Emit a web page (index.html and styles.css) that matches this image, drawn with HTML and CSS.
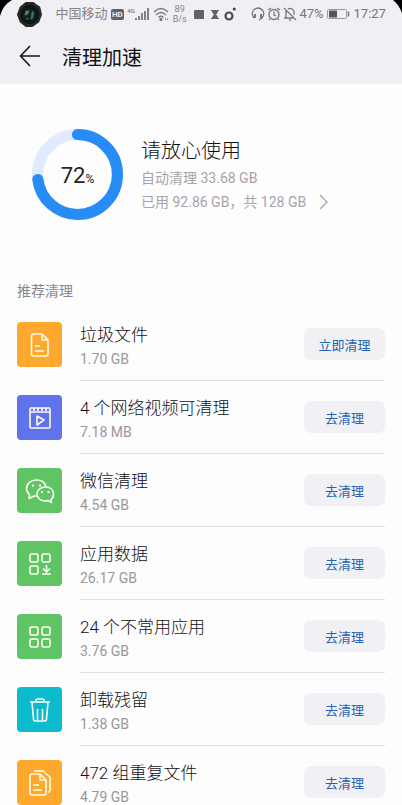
FILE: index.html
```html
<!DOCTYPE html>
<html lang="zh-CN">
<head>
<meta charset="utf-8">
<meta name="viewport" content="width=device-width, initial-scale=1">
<title>清理加速</title>
<link rel="stylesheet" href="styles.css">
</head>
<body>
<svg class="defs" width="0" height="0" aria-hidden="true">
  <symbol id="apps" viewBox="0 0 24 24"><rect x="2" y="2" width="8" height="8" rx="1.5"/><rect x="14" y="2" width="8" height="8" rx="1.5"/><rect x="2" y="14" width="8" height="8" rx="1.5"/></symbol>
</svg>
<header class="top">
  <svg class="corner corner-left" viewBox="0 0 14 16" aria-hidden="true"><path d="M0 0H12Q3 5 0 16Z"/></svg>
  <svg class="corner corner-right" viewBox="0 0 9 16" aria-hidden="true"><path d="M9 0H0Q6 5 9 13Z"/></svg>
  <div class="status">
    <svg class="camera" viewBox="0 0 28 28" aria-hidden="true"><path d="M10 1h8l7 5 2 8-3 8-7 5h-7l-6-5-3-8 3-8z" fill="#292628"/><circle cx="14" cy="14" r="10" fill="#101614"/><circle cx="14" cy="14" r="6" fill="#14251f"/><path d="M10 10l4 0-2 4-3 1z" fill="#508b74"/><path d="M17 10l2 3-2 6-2 0 1-6z" fill="#397562"/><path d="M10 17l3 1 0 2-3-1z" fill="#27584a"/></svg>
    <span class="carrier">中国移动</span>
    <span class="hd">HD</span>
    <span class="cell"><span class="net">4G</span><svg class="signal" viewBox="0 0 15 14" aria-hidden="true"><path d="M1 11v2M4 9v4M7 6v7M10 4v9M13 1v12"/></svg></span>
    <svg class="wifi" viewBox="0 0 16 14" aria-hidden="true"><path d="M1 5Q8-2 15 5M3 8q5-5 10 0M5.500 10.500q2.500-2.500 5 0"/><circle cx="8" cy="12.500" r="1"/><path d="M12 12h1M14 12h1"/></svg>
    <span class="speed"><span>89</span><span>B/s</span></span>
    <svg class="mini" viewBox="0 0 12 14" aria-hidden="true"><rect x="1" y="3" width="10" height="9" rx="1" fill="#626164"/></svg>
    <svg class="mini" viewBox="0 0 12 14" aria-hidden="true"><path d="M2 3h8v1H9q0 2-2 3.500Q9 9 9 11h1v1H2v-1h1q0-2 2-3.500Q3 6 3 4H2z" fill="#626164"/></svg>
    <svg class="mini" viewBox="0 0 12 14" aria-hidden="true"><circle cx="5" cy="9" r="3.500" fill="none" stroke="#4c4b4e" stroke-width="2.200"/><circle cx="10.300" cy="2" r="1.600" fill="#4c4b4e"/></svg>
    <span class="alerts">
      <svg class="small line" viewBox="0 0 14 14" aria-hidden="true"><path d="M3 11Q0 7 2 4Q4 1 7 1T12 4Q14 7 11 11L8 13"/><path d="M4 7v4M10 7v4" stroke-width="2"/></svg>
      <svg class="small line" viewBox="0 0 14 14" aria-hidden="true"><circle cx="7" cy="7.500" r="5"/><path d="M7 4.500V8l2 1M1 3l3-2M13 3l-3-2M3 12l-1 1M11 12l1 1"/></svg>
      <svg class="small line" viewBox="0 0 14 14" aria-hidden="true"><path d="M1 1l12 12M3 4v5l-1 2h8M5 2q2-1 4 0 2 1 2 3v3M6 13h2"/></svg>
      <span class="percent">47%</span>
    </span>
    <svg class="battery" viewBox="0 0 23 12" aria-hidden="true"><rect x=".5" y="1.500" width="19" height="9" rx="1" fill="none" stroke="#9b9a9d"/><rect x="2" y="2.500" width="8" height="7" fill="#565558"/><path d="M21.500 3.500v5" stroke="#77767a" stroke-width="1.500"/></svg>
    <span class="time">17:27</span>
  </div>
  <div class="titlebar">
    <button class="back" type="button" aria-label="返回"><svg viewBox="0 0 22 22" aria-hidden="true"><path d="M21 11H2M11 1L1.500 11 11 21"/></svg></button>
    <h1>清理加速</h1>
  </div>
</header>
<main>
  <section class="summary">
    <div class="gauge">
      <svg viewBox="0 0 90 90" aria-hidden="true"><circle class="track" cx="45" cy="45" r="39.500"/><circle class="value" cx="45" cy="45" r="39.500" pathLength="100" stroke-dasharray="73 27" transform="rotate(-90 45 45)"/></svg>
      <p class="gauge-text">72<small>%</small></p>
    </div>
    <div class="summary-text">
      <h2>请放心使用</h2>
      <p>自动清理 33.68 GB</p>
      <a href="#storage">已用 92.86 GB，共 128 GB<svg class="chevron" viewBox="0 0 10 16" aria-hidden="true"><path d="M1 1l7 7-7 7"/></svg></a>
    </div>
  </section>
  <section class="cleanup" id="storage">
    <h2 class="section-title">推荐清理</h2>
    <ul class="list">
      <li>
        <span class="tile orange"><svg viewBox="0 0 24 24" aria-hidden="true"><path d="M5.500 1H14l6 6v14q0 2-2 2H5.500q-2 0-2-2V3q0-2 2-2zM14 1v6h6M7 13h5M7 18h9"/></svg></span>
        <div class="row"><div class="info"><h3>垃圾文件</h3><p>1.70 GB</p></div><button type="button">立即清理</button></div>
      </li>
      <li>
        <span class="tile indigo"><svg viewBox="0 0 24 24" aria-hidden="true"><rect x="2" y="2" width="20" height="20" rx="1"/><path d="M2 6h20M6 2v3M10 2v3M14 2v3M18 2v3M9 10l7 4-7 5z"/></svg></span>
        <div class="row"><div class="info"><h3>4 个网络视频可清理</h3><p>7.18 MB</p></div><button type="button">去清理</button></div>
      </li>
      <li>
        <span class="tile green"><svg class="wide" viewBox="0 0 30 26" aria-hidden="true"><path d="M12 18H9l-5 2.500.5-4Q1.500 14 1.500 10.500C1.500 5.500 6 2 11.500 2c5 0 8.500 2.500 9.500 6.500"/><path d="M20.500 9c5 0 8 3 8 7 0 2.500-1 4.500-2.500 5.500l.5 3-3.500-2q-1 .5-2.500.5c-5 0-8.500-3-8.500-7s3.500-7 8.500-7z"/><path d="M7 7.500h2M14 7.500h2M16 14h2M22.500 14h2" stroke-width="2"/></svg></span>
        <div class="row"><div class="info"><h3>微信清理</h3><p>4.54 GB</p></div><button type="button">去清理</button></div>
      </li>
      <li>
        <span class="tile green"><svg viewBox="0 0 24 24" aria-hidden="true"><use href="#apps"/><path d="M18.500 13v7M15 16.500l3.500 3.500 3.500-3.500M14 22h9"/></svg></span>
        <div class="row"><div class="info"><h3>应用数据</h3><p>26.17 GB</p></div><button type="button">去清理</button></div>
      </li>
      <li>
        <span class="tile green"><svg viewBox="0 0 24 24" aria-hidden="true"><use href="#apps"/><rect x="14" y="14" width="8" height="8" rx="1.500"/></svg></span>
        <div class="row"><div class="info"><h3>24 个不常用应用</h3><p>3.76 GB</p></div><button type="button">去清理</button></div>
      </li>
      <li>
        <span class="tile cyan"><svg viewBox="0 0 24 24" aria-hidden="true"><path d="M2 4h20M8 4V2q0-1 1-1h6q1 0 1 1v2M4 4l1.500 17q0 2 2 2h9q2 0 2-2L20 4M9.500 11v11M14.500 11v11"/></svg></span>
        <div class="row"><div class="info"><h3>卸载残留</h3><p>1.38 GB</p></div><button type="button">去清理</button></div>
      </li>
      <li>
        <span class="tile orange"><svg class="wide" viewBox="0 0 30 26" aria-hidden="true"><path d="M7 4h8l6 6V23q0 2-2 2H7q-2 0-2-2V6q0-2 2-2zM15 4v6h6M8 15h6M8 20h9M9 1h9l7 6V20q0 2-2 2.500"/></svg></span>
        <div class="row"><div class="info"><h3>472 组重复文件</h3><p>4.79 GB</p></div><button type="button">去清理</button></div>
      </li>
    </ul>
  </section>
</main>
</body>
</html>
```
FILE: styles.css
```css
* { box-sizing: border-box; }
body {
  margin: 0;
  background: #fdfdfe;
  color: #252426;
  font-family: Roboto, "Noto Sans CJK SC", sans-serif;
}
h1, h2, h3, p, ul { margin: 0; padding: 0; font-weight: 400; }
button { border: 0; font-family: inherit; cursor: pointer; }
svg { display: block; flex: none; }
.defs { position: absolute; }

.top { position: relative; background: #f0eff3; }
.corner { position: absolute; top: 0; width: 14px; height: 16px; }
.corner-left { left: 0; }
.corner-right { right: 0; width: 9px; }
.status {
  display: flex;
  align-items: center;
  justify-content: space-between;
  height: 28px;
  padding: 0 16px;
  color: #858488;
  font-size: 13px;
  line-height: 16px;
  white-space: nowrap;
}
.camera { width: 27px; height: 27px; margin-right: 9px; }
.hd {
  padding: 0 1px;
  border-radius: 2px;
  background: #626164;
  color: #f0eff3;
  font-size: 8px;
  font-weight: 700;
  line-height: 11px;
}
.cell { display: flex; }
.net { font-size: 6px; line-height: 8px; font-weight: 700; }
.signal { width: 15px; height: 14px; }
.signal, .wifi, .line { fill: none; stroke: #77767a; stroke-width: 1.3; }
.signal { stroke-width: 1.8; }
.wifi { width: 16px; height: 14px; }
.speed { display: flex; flex-direction: column; align-items: center; font-size: 9px; line-height: 10px; margin-right: 3px; }
.mini { width: 12px; height: 14px; }
.alerts { display: flex; align-items: center; gap: 2px; margin-left: 12px; }
.small { width: 14px; height: 14px; }
.percent, .time { color: #77767a; font-size: 13px; }
.battery { width: 23px; height: 12px; }
.titlebar { display: flex; align-items: center; height: 56px; padding: 0 19px; gap: 21px; }
.back { display: flex; padding: 0; background: none; }
.back svg { width: 22px; height: 22px; fill: none; stroke: #19181a; stroke-width: 1.6; }
h1 { padding-top: 4px; color: #121113; font-size: 20px; line-height: 28px; }

.summary { display: flex; align-items: center; gap: 18px; padding: 45px 32px 31px; }
.gauge { display: grid; place-items: center; flex: none; }
.gauge > * { grid-area: 1 / 1; }
.gauge svg { width: 91px; height: 91px; fill: none; stroke-width: 11; }
.track { stroke: #e1ebfd; }
.value { stroke: #278cf5; stroke-linecap: round; }
.gauge-text { padding-top: 6px; font-size: 22px; line-height: 28px; color: #252426; }
.gauge-text small { font-size: 12px; }
.summary-text { color: #a5a4a8; font-size: 14px; line-height: 24px; }
.summary-text h2 { color: #121113; font-size: 20px; line-height: 30px; font-weight: 300; }
.summary-text a { display: flex; align-items: center; gap: 13px; color: inherit; text-decoration: none; white-space: nowrap; }
.chevron { width: 10px; height: 16px; fill: none; stroke: #a5a4a8; stroke-width: 1.3; }

.cleanup { padding: 28px 17px 0; }
.section-title { color: #88878b; font-size: 14px; line-height: 24px; }
.list { list-style: none; padding-top: 5px; }
.list li { display: flex; align-items: center; gap: 18px; }
.tile { display: grid; place-items: center; flex: none; width: 45px; height: 45px; border-radius: 4px; }
.tile svg { width: 24px; height: 24px; fill: none; stroke: #fffdf0; stroke-width: 1.6; stroke-linejoin: round; }
.tile .wide { width: 30px; height: 26px; }
.orange { background: #fea82d; }
.indigo { background: #5e73ec; }
.green { background: #5fc464; }
.cyan { background: #0cbbce; }
.row {
  display: flex;
  align-items: center;
  justify-content: space-between;
  flex: 1;
  height: 73px;
  border-bottom: 1px solid #dfdee1;
}
.list li:last-child .row { border-bottom-color: transparent; }
.info { padding-top: 3px; }
.info h3 { color: #121113; font-size: 17px; line-height: 26px; font-weight: 300; }
.info p { color: #98979b; font-size: 14px; line-height: 22px; }
.row button {
  width: 81px;
  height: 32px;
  padding: 0;
  border-radius: 7px;
  background: #f1f0f4;
  color: #2465b2;
  font-size: 13px;
  font-weight: 400;
}
```
